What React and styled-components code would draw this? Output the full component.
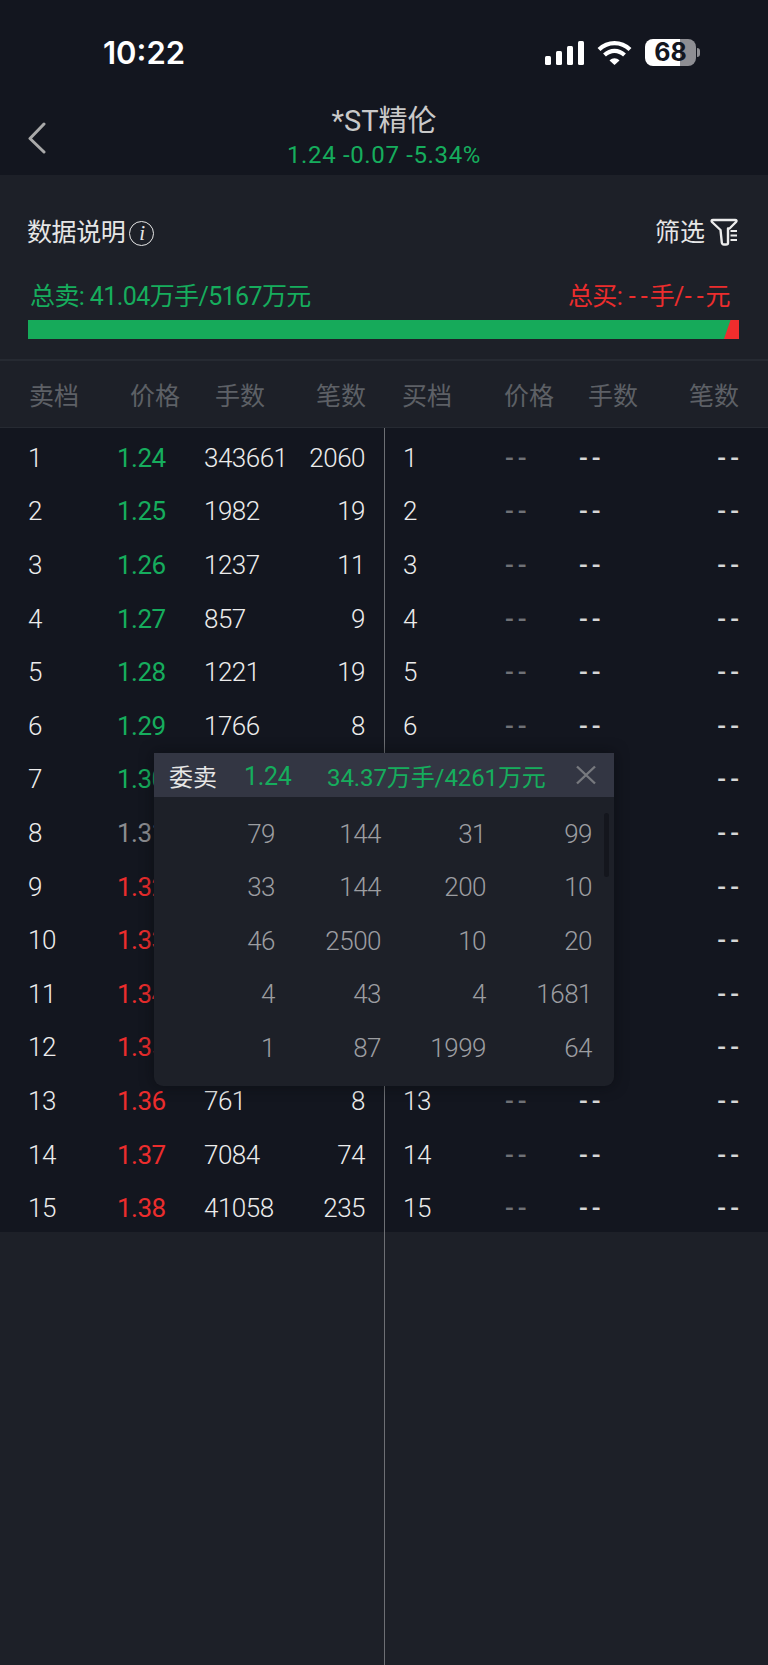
import React from "react";
import styled, { createGlobalStyle } from "styled-components";

const GREEN = "#16ad5d";
const RED = "#ec2d2d";

const GlobalStyle = createGlobalStyle`
  html, body {
    margin: 0;
    padding: 0;
    background: #1d2028;
  }
  * {
    box-sizing: border-box;
  }
`;

const Page = styled.div`
  position: relative;
  width: 768px;
  height: 1665px;
  overflow: hidden;
  display: flex;
  flex-direction: column;
  background: #1d2028;
  color: #e6e6e6;
  font-family: Roboto, "Noto Sans CJK SC", sans-serif;
`;

const TopArea = styled.div`
  height: 175px;
  flex: none;
  background: #13161f;
`;

const StatusBar = styled.div`
  height: 100px;
  padding: 39px 72px 0 103px;
  display: flex;
  justify-content: space-between;
  align-items: flex-start;
`;

const Time = styled.div`
  font-family: Inter, sans-serif;
  font-size: 31px;
  line-height: 28px;
  font-weight: 600;
  letter-spacing: 0;
  color: #fff;
`;

const StatusIcons = styled.div`
  display: flex;
  align-items: center;
  gap: 13px;
  height: 27px;
`;

const Battery = styled.div`
  position: relative;
  width: 51px;
  height: 27px;
  border-radius: 8px;
  background: linear-gradient(to right, #fff 0 35px, #8e8e93 35px);
  color: #13161f;
  font-family: Inter, sans-serif;
  font-size: 25px;
  font-weight: 700;
  line-height: 27px;
  text-align: center;
  &::after {
    content: "";
    position: absolute;
    right: -4px;
    top: 9px;
    width: 3px;
    height: 9px;
    border-radius: 0 3px 3px 0;
    background: #8e8e93;
  }
`;

const NavBar = styled.div`
  height: 75px;
  padding: 0 28px;
  display: grid;
  grid-template-columns: 1fr auto 1fr;
  align-items: center;
`;

const Title = styled.div`
  text-align: center;
`;

const TitleName = styled.div`
  font-size: 29px;
  line-height: 32px;
  margin-top: -1px;
  color: #c9c9c9;
`;

const TitleQuote = styled.div`
  font-size: 24px;
  line-height: 28px;
  margin-top: 4px;
  color: ${GREEN};
  letter-spacing: 0.65px;
`;

const Summary = styled.div`
  height: 186px;
  flex: none;
  padding: 42px 29px 0 28px;
  border-bottom: 2px solid #262a32;
`;

const SummaryTop = styled.div`
  display: flex;
  justify-content: space-between;
  align-items: center;
  height: 32px;
`;

const LabelGroup = styled.div`
  display: flex;
  align-items: center;
  font-size: 25px;
  line-height: 32px;
  color: #e6e6e6;
`;

const InfoLabel = styled(LabelGroup)`
  margin-left: -1px;
  letter-spacing: -0.4px;
`;

const InfoMark = styled.span`
  width: 25px;
  height: 25px;
  margin-left: 4px;
  border: 1.5px solid #e6e6e6;
  border-radius: 50%;
  font-family: "Liberation Serif", serif;
  font-style: italic;
  font-size: 21px;
  line-height: 22px;
  text-align: center;
`;

const Totals = styled.div`
  margin-top: 32px;
  display: flex;
  justify-content: space-between;
  font-size: 25px;
  line-height: 32px;
  letter-spacing: -0.6px;
  padding: 0 9px 0 2px;
`;

const TotalText = styled.span`
  color: ${(p) => p.$color};
`;

const TotalDash = styled.span`
  letter-spacing: 5px;
  margin-right: -3px;
  margin-left: 1px;
`;

const Bar = styled.div`
  margin-top: 7px;
  height: 19px;
  background: #16aa5a;
  display: flex;
  justify-content: flex-end;
`;

const BarSell = styled.div`
  width: 15px;
  background: #f02d2d;
  clip-path: polygon(6.5px 0, 100% 0, 100% 100%, 0 100%);
`;

const HeadRow = styled.div`
  height: 67px;
  flex: none;
  display: grid;
  grid-template-columns: 385px 383px;
  border-bottom: 1px solid #262a32;
`;

const HeadSide = styled.div`
  display: grid;
  grid-template-columns: ${(p) => p.$cols};
  padding: ${(p) => p.$pad};
  align-items: center;
  font-size: 25px;
  color: #5d6066;
`;

const Right = styled.span`
  text-align: right;
`;

const Book = styled.div`
  flex: 1;
  display: grid;
  grid-template-columns: 385px 383px;
`;

const Side = styled.div`
  border-right: ${(p) => (p.$divider ? "1px solid #6d6f74" : "none")};
`;

const Rows = styled.div`
  background: #13161f;
`;

const Row = styled.div`
  height: 53.6px;
  padding-top: 6px;
  display: grid;
  grid-template-columns: ${(p) => p.$cols};
  padding-left: ${(p) => p.$left};
  padding-right: ${(p) => p.$right};
  align-items: center;
  font-size: 26px;
  font-weight: 300;
  line-height: 30px;
  letter-spacing: -0.5px;
  color: #ececec;
`;

const Price = styled.span`
  color: ${(p) => p.$color};
  font-weight: 400;
`;

const Dash = styled.span`
  color: ${(p) => (p.$muted ? "#6f7176" : "#d6d6d6")};
  text-align: ${(p) => (p.$end ? "right" : "left")};
  letter-spacing: 4px;
  margin-right: ${(p) => (p.$end ? "-4px" : "0")};
  font-weight: 500;
`;

const Popup = styled.div`
  position: absolute;
  left: 154px;
  top: 753px;
  width: 460px;
  height: 333px;
  background: #1d2028;
  border-radius: 0 0 9px 9px;
  box-shadow: 0 0 14px rgba(8, 9, 13, 0.55);
`;

const PopupHead = styled.div`
  height: 44px;
  padding: 0 18px 0 15px;
  display: flex;
  align-items: center;
  background: #333643;
  font-size: 25px;
`;

const PopupTitle = styled.span`
  width: 75px;
  color: #e6e6e6;
  font-size: 24px;
`;

const PopupPrice = styled.span`
  width: 83px;
  padding-top: 3px;
  color: ${GREEN};
  letter-spacing: -0.3px;
`;

const PopupTotal = styled.span`
  flex: 1;
  font-size: 24px;
  letter-spacing: -0.1px;
  color: ${GREEN};
`;

const PopupBody = styled.div`
  position: relative;
  padding-top: 10px;
`;

const PopupRow = styled.div`
  height: 53.5px;
  display: grid;
  grid-template-columns: 121px 106px 105px 106px;
  align-items: center;
  font-size: 26px;
  font-weight: 300;
  letter-spacing: -0.5px;
  color: #9c9da1;
  text-align: right;
`;

const Scroll = styled.div`
  position: absolute;
  right: 5px;
  top: 16px;
  width: 5px;
  height: 64px;
  border-radius: 3px;
  background: #14161d;
`;

const prices = ["1.24", "1.25", "1.26", "1.27", "1.28", "1.29", "1.30", "1.31", "1.32", "1.33", "1.34", "1.35", "1.36", "1.37", "1.38"];
const qty = ["343661", "1982", "1237", "857", "1221", "1766", "", "", "", "", "", "", "761", "7084", "41058"];
const count = ["2060", "19", "11", "9", "19", "8", "", "", "", "", "", "", "8", "74", "235"];
const orders = [
  ["79", "144", "31", "99"],
  ["33", "144", "200", "10"],
  ["46", "2500", "10", "20"],
  ["4", "43", "4", "1681"],
  ["1", "87", "1999", "64"],
];

const priceColor = (i) => (i < 7 ? GREEN : i === 7 ? "#8b8c90" : RED);
// rows 7-12 sit under the popup on the buy side
const isCovered = (i) => i >= 6 && i <= 11;

const SignalIcon = () => (
  <svg width="39" height="24" viewBox="0 0 39 24" fill="#fff">
    <rect x="0" y="15" width="6" height="9" rx="1.5" />
    <rect x="11" y="10" width="6" height="14" rx="1.5" />
    <rect x="22" y="5" width="6" height="19" rx="1.5" />
    <rect x="33" y="0" width="6" height="24" rx="1.5" />
  </svg>
);

const WifiIcon = () => (
  <svg width="35" height="25" viewBox="0 0 35 25" fill="none" stroke="#fff" strokeWidth="4.2">
    <path d="M2 9.5C11 1 24 1 33 9.5" />
    <path d="M7.5 15C13.5 9.5 21.5 9.5 27.5 15" />
    <path d="M12.5 20.5L17.5 25L22.5 20.5C19.5 17.5 15.5 17.5 12.5 20.5Z" fill="#fff" stroke="none" />
  </svg>
);

const BackIcon = () => (
  <svg width="18" height="32" viewBox="0 0 18 32" fill="none" stroke="#a9a9a9" strokeWidth="3" strokeLinecap="round" strokeLinejoin="round">
    <path d="M16 2L2 16.500L16 30" />
  </svg>
);

const FilterIcon = () => (
  <svg width="29" height="28" viewBox="0 0 29 28" fill="none" stroke="#ececec" strokeWidth="2.4" strokeLinejoin="round" style={{ marginLeft: 5, marginTop: -3 }}>
    <path d="M2 4Q0.800 2 3 2H25Q27.500 2 26 4L19.500 10.500H18V25Q18 26.500 16 26.500H14Q12 26.500 11.800 24.500L10.500 12Z" />
    <path d="M20.500 13H27M20.500 17.500H27M20.500 22H27" strokeWidth="1.8" />
  </svg>
);

const CloseIcon = () => (
  <svg width="20" height="20" viewBox="0 0 20 20" stroke="#77797e" strokeWidth="2.4" fill="none">
    <path d="M1 1.500L19 18.500M19 1.500L1 18.500" />
  </svg>
);

const LEFT_COLS = "89px 87px 1fr auto";
const RIGHT_COLS = "102px 74px 1fr auto";

const App = () => {
  return (
    <Page>
      <GlobalStyle />
      <TopArea>
        <StatusBar>
          <Time>10:22</Time>
          <StatusIcons>
            <SignalIcon />
            <WifiIcon />
            <Battery>68</Battery>
          </StatusIcons>
        </StatusBar>
        <NavBar>
          <BackIcon />
          <Title>
            <TitleName>*ST精伦</TitleName>
            <TitleQuote>1.24 -0.07 -5.34%</TitleQuote>
          </Title>
          <span />
        </NavBar>
      </TopArea>

      <Summary>
        <SummaryTop>
          <InfoLabel>
            数据说明
            <InfoMark>i</InfoMark>
          </InfoLabel>
          <LabelGroup>
            筛选
            <FilterIcon />
          </LabelGroup>
        </SummaryTop>
        <Totals>
          <TotalText $color={GREEN}>总卖: 41.04万手/5167万元</TotalText>
          <TotalText $color={RED}>
            总买: <TotalDash>--</TotalDash>手/<TotalDash>--</TotalDash>元
          </TotalText>
        </Totals>
        <Bar>
          <BarSell />
        </Bar>
      </Summary>

      <HeadRow>
        <HeadSide $cols="101px 85px 1fr auto" $pad="0 19px 0 29px">
          <span>卖档</span>
          <span>价格</span>
          <span>手数</span>
          <Right>笔数</Right>
        </HeadSide>
        <HeadSide $cols="102px 84px 1fr auto" $pad="0 29px 0 17px">
          <span>买档</span>
          <span>价格</span>
          <span>手数</span>
          <Right>笔数</Right>
        </HeadSide>
      </HeadRow>

      <Book>
        <Side $divider>
          <Rows>
            {prices.map((p, i) => (
              <Row key={p} $cols={LEFT_COLS} $left="28px" $right="19px">
                <span>{i + 1}</span>
                <Price $color={priceColor(i)}>{p}</Price>
                <span>{qty[i]}</span>
                <Right>{count[i]}</Right>
              </Row>
            ))}
          </Rows>
        </Side>
        <Side>
          <Rows>
            {prices.map((p, i) => (
              <Row key={p} $cols={RIGHT_COLS} $left="18px" $right="29px">
                <span>{isCovered(i) ? "" : i + 1}</span>
                <Dash $muted>{isCovered(i) ? "" : "--"}</Dash>
                <Dash>{isCovered(i) ? "" : "--"}</Dash>
                <Dash $end>--</Dash>
              </Row>
            ))}
          </Rows>
        </Side>
      </Book>

      <Popup>
        <PopupHead>
          <PopupTitle>委卖</PopupTitle>
          <PopupPrice>1.24</PopupPrice>
          <PopupTotal>34.37万手/4261万元</PopupTotal>
          <CloseIcon />
        </PopupHead>
        <PopupBody>
          {orders.map((row, i) => (
            <PopupRow key={i}>
              {row.map((n, j) => (
                <span key={j}>{n}</span>
              ))}
            </PopupRow>
          ))}
          <Scroll />
        </PopupBody>
      </Popup>
    </Page>
  );
};

export default App;
